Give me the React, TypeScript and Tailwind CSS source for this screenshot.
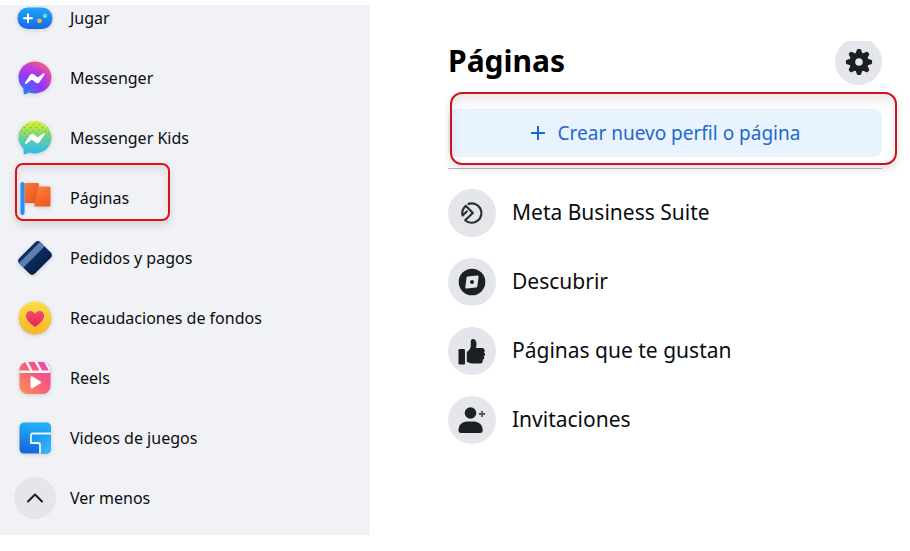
import type { ReactNode } from "react";

function GameIcon() {
  return (
    <svg viewBox="0 0 36 36" className="size-9 drop-shadow-sm" aria-hidden="true">
      <defs>
        <linearGradient id="game" x1="0" y1="0" x2="0" y2="1">
          <stop offset="0" stopColor="#22a4f8" />
          <stop offset="1" stopColor="#1368ea" />
        </linearGradient>
      </defs>
      <rect x="0.5" y="7.5" width="35" height="21.5" rx="10.5" fill="url(#game)" />
      <path d="M11 14.2v8M7 18.2h8" stroke="#fff" strokeWidth="2" strokeLinecap="round" />
      <circle cx="28" cy="15.8" r="2.2" fill="#63dfc6" />
      <circle cx="22.5" cy="20.8" r="2.4" fill="#f5b63f" />
    </svg>
  );
}

const bubble =
  "M18 1.5C8.800 1.500 1.500 8.400 1.500 17.600c0 4.400 1.900 8.300 4.900 11l.3 4.800c.1.900.8 1.200 1.500.9l4-1.800c1.800.6 3.800.9 5.800.9 9.200 0 16.500-6.700 16.500-15.800S27.200 1.500 18 1.500Z";
const bolt =
  "M8 22.500 13 15c.8-1.300 2.400-1.600 3.600-.7l3.600 2.800c.4.300.8.300 1.200 0l4.700-3.700c.9-.6 1.900.3 1.400 1.300l-4.900 7.300c-.8 1.300-2.400 1.600-3.600.7l-3.600-2.800c-.4-.3-.8-.3-1.200 0l-4.800 3.800c-.9.6-1.900-.2-1.400-1.200Z";

function MessengerIcon() {
  return (
    <svg viewBox="0 0 36 36" className="size-9 drop-shadow-sm" aria-hidden="true">
      <defs>
        <radialGradient id="messenger" cx="0.15" cy="1" r="1.15">
          <stop offset="0" stopColor="#1686ff" />
          <stop offset="0.5" stopColor="#9436fb" />
          <stop offset="0.75" stopColor="#c43fd6" />
          <stop offset="1" stopColor="#ff6076" />
        </radialGradient>
      </defs>
      <path d={bubble} fill="url(#messenger)" />
      <path d={bolt} fill="#fff" />
    </svg>
  );
}

function MessengerKidsIcon() {
  return (
    <svg viewBox="0 0 36 36" className="size-9 drop-shadow-sm" aria-hidden="true">
      <defs>
        <linearGradient id="kids" x1="0" y1="0" x2="0" y2="1">
          <stop offset="0.05" stopColor="#dcf324" />
          <stop offset="0.55" stopColor="#5fcea8" />
          <stop offset="1" stopColor="#27b9f7" />
        </linearGradient>
        <pattern id="dots" width="6" height="6" patternUnits="userSpaceOnUse">
          <circle cx="1.5" cy="1.5" r="1.100" fill="#46b45d" />
          <circle cx="4.5" cy="4.5" r="1.100" fill="#5cc04b" />
        </pattern>
        <clipPath id="kids-top">
          <rect width="36" height="20" />
        </clipPath>
      </defs>
      <path d={bubble} fill="url(#kids)" />
      <path d={bubble} fill="url(#dots)" clipPath="url(#kids-top)" opacity="0.6" />
      <path d={bolt} fill="#fff" />
    </svg>
  );
}

function FlagIcon() {
  return (
    <svg viewBox="0 0 36 36" className="size-9 drop-shadow-sm" aria-hidden="true">
      <defs>
        <linearGradient id="flag" x1="0" y1="0" x2="0.6" y2="1">
          <stop offset="0" stopColor="#fd8440" />
          <stop offset="1" stopColor="#f05a20" />
        </linearGradient>
        <linearGradient id="flag-back" x1="0" y1="0" x2="1" y2="1">
          <stop offset="0" stopColor="#fb7a38" />
          <stop offset="1" stopColor="#e5501c" />
        </linearGradient>
      </defs>
      <rect x="7.5" y="3" width="14.500" height="20" rx="1" fill="url(#flag-back)" />
      <path d="M22 6.500H32.500q1 0 1 1V25.500q0 1-1 1H18.200q-1.200 0-.9-1.200L21 7.500q.2-1 1-1Z" fill="url(#flag)" />
      <rect x="3.5" y="2" width="4" height="33" rx="2" fill="#2e8df7" />
    </svg>
  );
}

function CardIcon() {
  return (
    <svg viewBox="0 0 36 36" className="size-9 drop-shadow-sm" aria-hidden="true">
      <defs>
        <linearGradient id="card" x1="0" y1="0" x2="1" y2="1">
          <stop offset="0.2" stopColor="#0d3468" />
          <stop offset="1" stopColor="#03183f" />
        </linearGradient>
        <clipPath id="card-shape">
          <rect x="3" y="7" width="30" height="22" rx="4" transform="rotate(-45 18 18)" />
        </clipPath>
      </defs>
      <g clipPath="url(#card-shape)">
        <rect width="36" height="36" fill="url(#card)" />
        <path d="M1.500 23.500 23.500 1.500l4.500 4.500L6 28Z" fill="#5f7fb0" />
      </g>
    </svg>
  );
}

function HeartIcon() {
  return (
    <svg viewBox="0 0 36 36" className="size-9 drop-shadow-sm" aria-hidden="true">
      <defs>
        <linearGradient id="coin" x1="0" y1="0" x2="0" y2="1">
          <stop offset="0" stopColor="#fcdf49" />
          <stop offset="1" stopColor="#f8b32b" />
        </linearGradient>
        <linearGradient id="heart" x1="0" y1="0" x2="0" y2="1">
          <stop offset="0" stopColor="#f64a72" />
          <stop offset="1" stopColor="#e52650" />
        </linearGradient>
      </defs>
      <circle cx="18" cy="18" r="16.5" fill="url(#coin)" />
      <path
        d="M18 14c1-2 2.500-3 4.600-3 2.700 0 4.400 2 4.400 4.700 0 4.800-5 8.200-9 11.300-4-3.100-9-6.500-9-11.300C9 13 10.800 11 13.400 11c2.100 0 3.600 1 4.600 3Z"
        fill="url(#heart)"
      />
    </svg>
  );
}

function ReelsIcon() {
  return (
    <svg viewBox="0 0 36 36" className="size-9 drop-shadow-sm" aria-hidden="true">
      <defs>
        <linearGradient id="reels" x1="0" y1="1" x2="1" y2="0">
          <stop offset="0" stopColor="#fb9d50" />
          <stop offset="0.5" stopColor="#f95f76" />
          <stop offset="1" stopColor="#dd3fbd" />
        </linearGradient>
        <clipPath id="reels-shape">
          <rect x="2.5" y="2" width="31" height="32" rx="8" />
        </clipPath>
      </defs>
      <g clipPath="url(#reels-shape)">
        <rect width="36" height="36" fill="url(#reels)" />
        <path d="M0 11.700h36M8-1 15 12M17.500-1l7 13M27-1l7 13" stroke="#f4f4fa" strokeWidth="2.600" />
      </g>
      <path d="M13.500 17.700c0-1.200 1.100-1.800 2-1.200l7.800 4.700c.9.600.9 1.800 0 2.300l-7.800 4.700c-.9.600-2-.1-2-1.200Z" fill="#fff" />
    </svg>
  );
}

function GamingVideoIcon() {
  return (
    <svg viewBox="0 0 36 36" className="size-9 drop-shadow-sm" aria-hidden="true">
      <defs>
        <linearGradient id="gaming-a" x1="0.6" y1="0" x2="0.4" y2="1">
          <stop offset="0.15" stopColor="#20aefb" />
          <stop offset="1" stopColor="#155fd3" />
        </linearGradient>
        <linearGradient id="gaming-b" x1="0" y1="0" x2="1" y2="1">
          <stop offset="0" stopColor="#1b8fe8" />
          <stop offset="1" stopColor="#3bc4ff" />
        </linearGradient>
        <clipPath id="gaming-shape">
          <rect x="2.5" y="2.5" width="31.500" height="31" rx="4.500" />
        </clipPath>
      </defs>
      <g clipPath="url(#gaming-shape)">
        <rect width="36" height="36" fill="url(#gaming-a)" />
        <path
          d="M38 13.500H16q-2 0-2 2V23H21q2 0 2 2V38H38Z"
          fill="url(#gaming-b)"
          stroke="#eaf5fd"
          strokeWidth="1.800"
        />
      </g>
    </svg>
  );
}

function ChevronIcon() {
  return (
    <span className="flex size-[42px] items-center justify-center rounded-full bg-[#e4e6eb]">
      <svg viewBox="0 0 20 12" className="h-3 w-5" fill="none" stroke="#1c1e21" strokeWidth="2" strokeLinecap="round" strokeLinejoin="round" aria-hidden="true">
        <path d="m3 9.500 7-7 7 7" />
      </svg>
    </span>
  );
}

function GearIcon() {
  return (
    <svg viewBox="-14 -14 28 28" className="size-7" fill="#1c2023" aria-hidden="true">
      <path
        fillRule="evenodd"
        d="M0-9.500a9.500 9.500 0 1 1 0 19 9.500 9.500 0 0 1 0-19Zm0 5.700a3.800 3.800 0 1 0 0 7.600 3.800 3.800 0 0 0 0-7.600Z"
      />
      {[0, 45, 90, 135, 180, 225, 270, 315].map((angle) => (
        <path key={angle} transform={`rotate(${angle})`} d="M-3.500-8-2.200-12q.4-1.100 1.300-1.100h1.800q.9 0 1.300 1.100L3.500-8Z" />
      ))}
    </svg>
  );
}

function BusinessIcon() {
  return (
    <svg viewBox="0 0 28 28" className="size-7" fill="none" stroke="#2b2f33" strokeWidth="2.200" strokeLinejoin="round" aria-hidden="true">
      <path d="M10.500 4.900A9.700 9.700 0 1 1 7.200 21.200L14.800 14 7.800 6.800A9.700 9.700 0 0 0 4.600 16.500L8.800 12.500" strokeLinecap="round" />
    </svg>
  );
}

function CompassIcon() {
  return (
    <svg viewBox="0 0 28 28" className="size-7" aria-hidden="true">
      <circle cx="14" cy="14" r="13.300" fill="#1c2023" />
      <path d="M9.600 8.500 19.500 7.600q1.200 0 1.100 1.200L19.300 18.500q-.2 1-1.200 1.100L8.300 20.600q-1.200 0-1-1.200L8.600 9.500q.1-.9 1-1Z" fill="#e4e6eb" />
      <circle cx="14" cy="14" r="2" fill="#1c2023" />
    </svg>
  );
}

function ThumbIcon() {
  return (
    <svg viewBox="0 0 28 28" className="size-7" fill="#1c2023" aria-hidden="true">
      <rect x="0.5" y="12" width="6.500" height="15.500" rx="1.200" />
      <path d="M8.800 15c2.800-1.800 4-4 4-6.500V4.500C12.800 2.500 14 2 15 2c2.300 0 3.500 2.500 3.500 5 0 1.500-.2 2.800-.6 4H24c1.500 0 2.700 1 2.700 2.400 0 .9-.3 1.500-.8 1.900.7.400 1.100 1.100 1.100 1.900 0 1-.5 1.700-1.300 2.100.4.400.5.900.5 1.400 0 1.100-.8 1.900-1.700 2.100.2.300.3.700.3 1.100 0 1.500-1.200 2.600-2.800 2.600h-5.500c-3 0-5.500-.5-7.700-1.800Z" />
    </svg>
  );
}

function InviteIcon() {
  return (
    <svg viewBox="0 0 28 28" className="size-7" fill="#1c2023" aria-hidden="true">
      <circle cx="12.500" cy="7" r="5.800" />
      <path d="M.5 24.500C.5 19 4 15.500 9 15.500h7c5 0 8.700 3.500 8.700 9 0 1.700-1 2.500-2.500 2.500H3C1.500 27 .5 26.200.5 24.500Z" />
      <path d="M24 5v6M21 8h6" stroke="#55595e" strokeWidth="1.800" />
    </svg>
  );
}

type Entry = { label: string; icon: ReactNode; marked?: boolean };

const shortcuts: Entry[] = [
  { label: "Jugar", icon: <GameIcon /> },
  { label: "Messenger", icon: <MessengerIcon /> },
  { label: "Messenger Kids", icon: <MessengerKidsIcon /> },
  { label: "Páginas", icon: <FlagIcon />, marked: true },
  { label: "Pedidos y pagos", icon: <CardIcon /> },
  { label: "Recaudaciones de fondos", icon: <HeartIcon /> },
  { label: "Reels", icon: <ReelsIcon /> },
  { label: "Videos de juegos", icon: <GamingVideoIcon /> },
];

const pageLinks: Entry[] = [
  { label: "Meta Business Suite", icon: <BusinessIcon /> },
  { label: "Descubrir", icon: <CompassIcon /> },
  { label: "Páginas que te gustan", icon: <ThumbIcon /> },
  { label: "Invitaciones", icon: <InviteIcon /> },
];

const rowClass = "flex h-15 w-full items-center gap-3.5 pl-3.5 text-left";

function RowContent({ icon, label }: Entry) {
  return (
    <>
      <span className="flex w-[42px] shrink-0 justify-center">{icon}</span>
      <span>{label}</span>
    </>
  );
}

export default function App() {
  return (
    <div className="flex min-h-screen items-start bg-white pt-[5px] font-['Noto_Sans','Open_Sans',sans-serif] text-[#0b0d10]">
      <aside className="w-[370px] shrink-0 overflow-hidden bg-[#f0f2f6] pb-[7px]">
        <nav aria-label="Accesos" className="-mt-[17px] text-base">
          <ul>
            {shortcuts.map((entry) => (
              <li key={entry.label} className="relative">
                <a href="#" className={rowClass}>
                  <RowContent {...entry} />
                </a>
                {entry.marked && (
                  <span className="pointer-events-none absolute -top-[5px] left-[15px] h-[58px] w-[155px] rounded-lg border-2 border-[#dc1219] shadow-[0_4px_8px_rgba(0,0,0,0.12),inset_0_5px_8px_rgba(0,0,0,0.08)]" />
                )}
              </li>
            ))}
          </ul>
          <button type="button" className={rowClass}>
            <RowContent icon={<ChevronIcon />} label="Ver menos" />
          </button>
        </nav>
      </aside>

      <main className="min-w-0 flex-1 pt-9 pr-7 pl-[78px]">
        <header className="flex h-12 items-start justify-between">
          <h1 className="text-3xl leading-10 font-bold text-black">Páginas</h1>
          <div className="h-11 overflow-hidden">
            <button type="button" aria-label="Configuración" className="-mt-[3px] flex size-[47px] items-center justify-center rounded-full bg-[#e4e6eb]">
              <GearIcon />
            </button>
          </div>
        </header>

        <div className="relative border-b border-[#b9bcc2] pt-5 pb-[11px]">
          <button type="button" className="flex h-12 w-full items-center justify-center gap-3 rounded-lg bg-[#e8f3fe] text-[19px] text-[#1d68cf]">
            <svg viewBox="0 0 16 16" className="size-4" stroke="currentColor" strokeWidth="2" aria-hidden="true">
              <path d="M8 1v14M1 8h14" />
            </svg>
            Crear nuevo perfil o página
          </button>
          <span className="pointer-events-none absolute top-[3px] -right-[15px] left-0.5 h-[73px] rounded-xl border-2 border-[#cf151b] shadow-[0_4px_8px_rgba(0,0,0,0.12),inset_0_8px_8px_rgba(0,0,0,0.08)]" />
        </div>

        <ul className="mt-5 flex flex-col gap-[21px] text-[21px]">
          {pageLinks.map((entry) => (
            <li key={entry.label}>
              <a href="#" className="flex items-center gap-4">
                <span className="flex size-12 shrink-0 items-center justify-center rounded-full bg-[#e4e6eb]">{entry.icon}</span>
                <span>{entry.label}</span>
              </a>
            </li>
          ))}
        </ul>
      </main>
    </div>
  );
}
